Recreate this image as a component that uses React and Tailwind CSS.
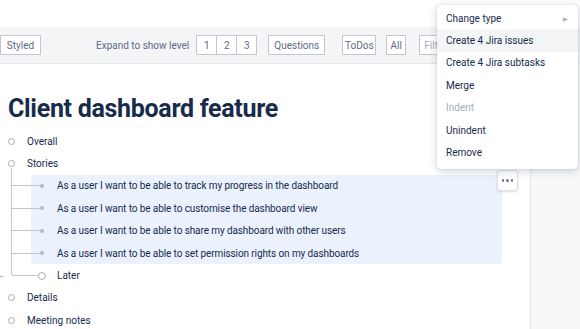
import React from "react";

const stories = [
  "As a user I want to be able to track my progress in the dashboard",
  "As a user I want to be able to customise the dashboard view",
  "As a user I want to be able to share my dashboard with other users",
  "As a user I want to be able to set permission rights on my dashboards",
];

const menuItems = [
  { label: "Change type", arrow: true },
  { label: "Create 4 Jira issues", active: true },
  { label: "Create 4 Jira subtasks" },
  { label: "Merge" },
  { label: "Indent", disabled: true },
  { label: "Unindent" },
  { label: "Remove" },
];

const ToolButton = ({ children, className = "" }) => (
  <div
    className={
      "h-[20px] flex items-center justify-center border border-[#c1c7d0] bg-white text-[10px] text-[#5e6c84] " +
      className
    }>
    {children}
  </div>
);

const Circle = ({ size = "w-[7px] h-[7px]" }) => (
  <span className={"block rounded-full border-[1.5px] border-[#a5adba] bg-white " + size} />
);

const TopRow = ({ label }) => (
  <div className="h-[22.4px] flex items-center">
    <span className="ml-[8px]">
      <Circle />
    </span>
    <span className="ml-[12px] text-[10px] text-[#172b4d]">{label}</span>
  </div>
);

export default function App() {
  return (
    <div
      className="relative w-[580px] h-[329px] overflow-hidden bg-white flex flex-col"
      style={{ fontFamily: "Roboto, 'Liberation Sans', sans-serif" }}>
      <div className="h-[27px] shrink-0" />

      {/* toolbar */}
      <div className="h-[37px] shrink-0 bg-[#f4f5f7] border-b border-[#e3e5e9] flex items-center">
        <ToolButton className="w-[41px] -ml-[40px]"> </ToolButton>
        <ToolButton className="w-[41px] -ml-px">Styled</ToolButton>
        <span className="ml-[55px] text-[10px] text-[#5e6c84]">Expand to show level</span>
        <div className="ml-[7px] flex">
          <ToolButton className="w-[21px]">1</ToolButton>
          <ToolButton className="w-[21px] -ml-px">2</ToolButton>
          <ToolButton className="w-[21px] -ml-px">3</ToolButton>
        </div>
        <ToolButton className="ml-[11px] w-[57px]">Questions</ToolButton>
        <ToolButton className="ml-[17px] w-[34px]">ToDos</ToolButton>
        <ToolButton className="ml-[10px] w-[20px]">All</ToolButton>
        <div className="ml-[13px] h-[20px] w-[120px] border border-[#c1c7d0] bg-white flex items-center px-[4px] text-[10px] text-[#a5adba]">
          Filter
        </div>
      </div>

      <div className="flex flex-1 min-h-0">
        {/* document */}
        <div className="w-[530px] relative">
          <h1 className="mt-[30px] ml-[8px] text-[25px] leading-[30px] font-bold tracking-[-0.3px] text-[#172b4d]">
            Client dashboard feature
          </h1>

          <div className="mt-[6px]">
            <TopRow label="Overall" />
            <TopRow label="Stories" />

            <div className="relative">
              <span className="absolute left-[11px] -top-[7px] w-px h-[101px] bg-[#c1c7d0]" />
              <div className="ml-[31px] w-[471px] bg-[#ebf2fe] rounded-[2px]">
                {stories.map((s) => (
                  <div key={s} className="relative h-[22.4px] flex items-center">
                    <span className="absolute -left-[20px] w-[29px] h-px bg-[#c1c7d0]" />
                    <span className="relative ml-[9px] w-[4px] h-[4px] rounded-full bg-[#b3bac5]" />
                    <span className="ml-[13px] text-[10px] tracking-[-0.1px] text-[#172b4d]">{s}</span>
                  </div>
                ))}
              </div>
              <div className="relative h-[22.4px] flex items-center">
                <span className="absolute left-[11px] top-[4px] w-[28px] h-[7.5px] border-l border-b border-[#c1c7d0] rounded-bl-[3px]" />
                <span className="relative ml-[38px]">
                  <Circle size="w-[8px] h-[8px]" />
                </span>
                <span className="ml-[11px] text-[10px] text-[#172b4d]">Later</span>
              </div>
            </div>

            <TopRow label="Details" />
            <TopRow label="Meeting notes" />
          </div>

          <span className="absolute left-0 top-[212px] w-[3px] h-px bg-[#a5adba]" />

          <div className="absolute left-[497px] top-[106px] w-[21px] h-[21px] bg-white border border-[#dfe1e6] rounded-[3px] shadow-sm flex items-center justify-center gap-[2px]">
            <span className="w-[2.5px] h-[2.5px] rounded-full bg-[#6b778c]" />
            <span className="w-[2.5px] h-[2.5px] rounded-full bg-[#6b778c]" />
            <span className="w-[2.5px] h-[2.5px] rounded-full bg-[#6b778c]" />
          </div>
        </div>

        {/* side panel */}
        <div className="flex-1 bg-[#f7f8f9] border-l border-[#e6e8eb]" />
      </div>

      {/* context menu */}
      <div className="absolute left-[437px] top-[5px] w-[141px] bg-white rounded-[4px] shadow-[0_2px_8px_rgba(9,30,66,0.2),0_0_1px_rgba(9,30,66,0.3)] pt-[2px] pb-[5px]">
        {menuItems.map((m) => (
          <div
            key={m.label}
            className={
              "h-[22.4px] flex items-center justify-between px-[9px] text-[10px] " +
              (m.active ? "bg-[#f4f5f7] " : "") +
              (m.disabled ? "text-[#a5adba]" : "text-[#172b4d]")
            }>
            <span>{m.label}</span>
            {m.arrow && <span className="text-[6px] text-[#a5adba] mr-[1px]">▶</span>}
          </div>
        ))}
      </div>
    </div>
  );
}
